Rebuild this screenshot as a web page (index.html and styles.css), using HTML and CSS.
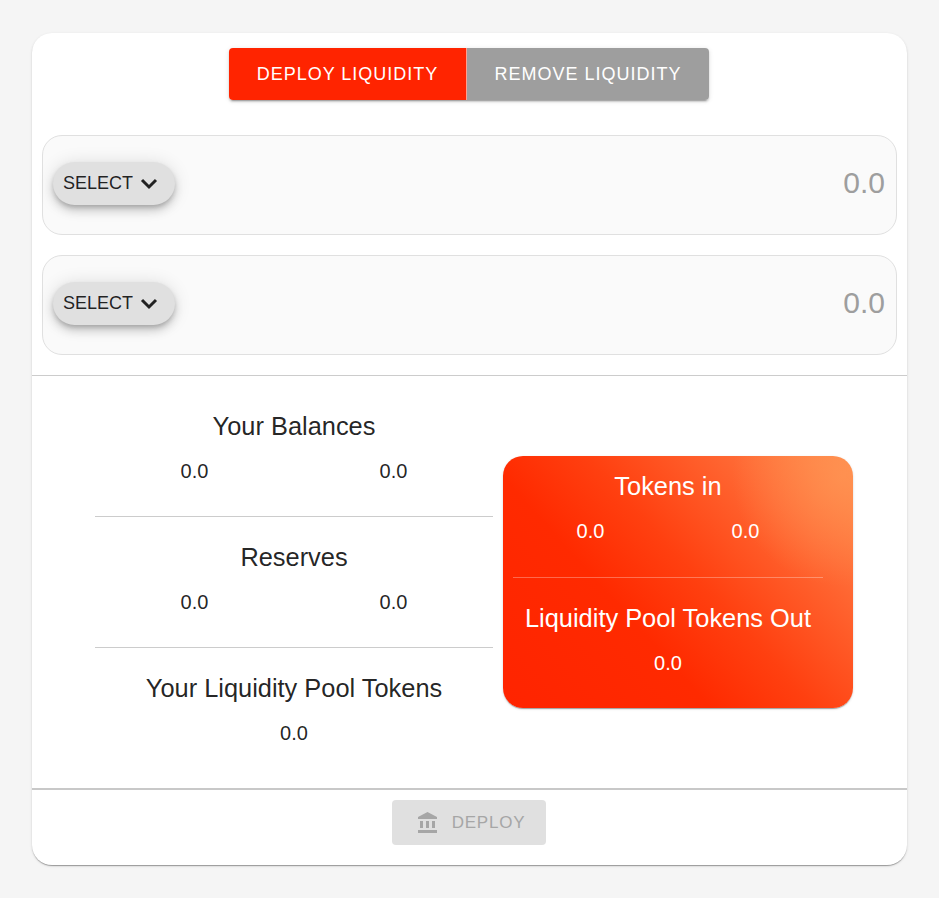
FILE: index.html
```html
<!DOCTYPE html>
<html lang="en">
<head>
<meta charset="utf-8">
<title>Liquidity</title>
<link rel="stylesheet" href="styles.css">
</head>
<body>
<main class="card">
  <div class="tabs">
    <button class="tab tab-active">Deploy Liquidity</button>
    <button class="tab tab-idle">Remove Liquidity</button>
  </div>
  <div class="inputs">
    <div class="field">
      <button class="select">SELECT
        <svg class="chev" viewBox="0 0 18 12"><path d="M2 2 9 9l7-7"/></svg>
      </button>
      <span class="amount">0.0</span>
    </div>
    <div class="field">
      <button class="select">SELECT
        <svg class="chev" viewBox="0 0 18 12"><path d="M2 2 9 9l7-7"/></svg>
      </button>
      <span class="amount">0.0</span>
    </div>
  </div>
  <hr class="rule">
  <div class="stats">
    <section class="left">
      <div class="group">
        <h2 class="title">Your Balances</h2>
        <div class="pair"><span>0.0</span><span>0.0</span></div>
      </div>
      <hr class="thin">
      <div class="group">
        <h2 class="title">Reserves</h2>
        <div class="pair"><span>0.0</span><span>0.0</span></div>
      </div>
      <hr class="thin">
      <div class="group">
        <h2 class="title">Your Liquidity Pool Tokens</h2>
        <div class="single">0.0</div>
      </div>
    </section>
    <section class="panel">
      <h2 class="title">Tokens in</h2>
      <div class="pair"><span>0.0</span><span>0.0</span></div>
      <hr class="panel-rule">
      <h2 class="title">Liquidity Pool Tokens Out</h2>
      <div class="single">0.0</div>
    </section>
  </div>
  <hr class="rule rule-bottom">
  <div class="actions">
    <button class="deploy" disabled>
      <svg class="bank" viewBox="0 0 24 24"><path d="M4 10v7h3v-7H4zm6 0v7h3v-7h-3zM2 22h19v-3H2v3zm14-12v7h3v-7h-3zm-4.500-9L2 6v2h19V6l-9.500-5z"/></svg>
      Deploy
    </button>
  </div>
</main>
</body>
</html>
```
FILE: styles.css
```css
* { box-sizing: border-box; }

html, body { margin: 0; }

body {
  background: #f5f5f5;
  padding: 33px 32px;
  font-family: "Liberation Sans", Arial, sans-serif;
  color: rgba(0, 0, 0, 0.87);
}

button { font-family: inherit; border: 0; }

.card {
  width: 875px;
  height: 832px;
  background: #fff;
  border-radius: 20px;
  box-shadow: 0 2px 1px -1px rgba(0,0,0,.2), 0 1px 1px 0 rgba(0,0,0,.14), 0 1px 3px 0 rgba(0,0,0,.12);
  padding-top: 15px;
}

.tabs {
  display: flex;
  width: 480px;
  margin-left: 197px;
  border-radius: 4px;
  box-shadow: 0 3px 1px -2px rgba(0,0,0,.2), 0 2px 2px 0 rgba(0,0,0,.14), 0 1px 5px 0 rgba(0,0,0,.12);
}

.tab {
  height: 52px;
  padding: 0;
  color: #fff;
  font-size: 18px;
  letter-spacing: 1px;
  text-transform: uppercase;
}

.tab-active {
  width: 238px;
  background: #ff2400;
  border-radius: 4px 0 0 4px;
  border-right: 1px solid #ffa08f;
}

.tab-idle {
  width: 242px;
  background: #9e9e9e;
  border-radius: 0 4px 4px 0;
}

.inputs {
  display: flex;
  flex-direction: column;
  gap: 20px;
  padding: 35px 10px 20px;
}

.field {
  display: flex;
  align-items: center;
  justify-content: space-between;
  height: 100px;
  padding: 0 11px 3px 10px;
  background: #fafafa;
  border: 1px solid #e0e0e0;
  border-radius: 20px;
}

.select {
  display: flex;
  align-items: center;
  gap: 7px;
  width: 122px;
  height: 43px;
  padding: 0 0 0 10px;
  background: #e0e0e0;
  border-radius: 22px;
  color: rgba(0, 0, 0, 0.87);
  font-size: 18px;
  box-shadow: 0 3px 5px -1px rgba(0,0,0,.2), 0 6px 10px 0 rgba(0,0,0,.14), 0 1px 18px 0 rgba(0,0,0,.12);
}

.chev { width: 18px; height: 12px; fill: none; stroke: #222; stroke-width: 3; }

.amount { margin-bottom: 1px; font-size: 30px; color: #9e9e9e; }

.rule {
  margin: 0;
  border: 0;
  height: 1px;
  background: #ccc;
}

.rule-bottom { height: 2px; background: #c8c8c8; }

.stats {
  display: flex;
  align-items: flex-start;
  gap: 10px;
  height: 412px;
  padding: 34px 0 0 63px;
}

.left { width: 398px; }

.group { text-align: center; }

.title {
  margin: 0;
  font-size: 25.4px;
  font-weight: 400;
  line-height: 32px;
  text-align: center;
}

.pair {
  display: grid;
  grid-template-columns: 1fr 1fr;
  margin-top: 14px;
  font-size: 20px;
  line-height: 30px;
  text-align: center;
}

.single {
  margin-top: 14px;
  font-size: 20px;
  line-height: 30px;
  text-align: center;
}

.thin {
  margin: 30px 0 24px;
  border: 0;
  height: 1px;
  background: #ccc;
}

.panel {
  width: 350px;
  height: 252px;
  margin-top: 46px;
  padding: 14px 30px 0 10px;
  color: #fff;
  border-radius: 20px;
  background:
    radial-gradient(circle 110px at 97% 8%, rgba(255, 150, 85, 0.7), rgba(255, 150, 85, 0)),
    linear-gradient(48deg, #ff2400 0%, #ff2a00 36%, #ff4010 54%, #ff6a35 80%, #ff8a4a 100%);
  box-shadow: 0 2px 1px -1px rgba(0,0,0,.2), 0 1px 1px 0 rgba(0,0,0,.14), 0 1px 3px 0 rgba(0,0,0,.12);
}

.panel-rule {
  margin: 31px 0 24px;
  border: 0;
  height: 1px;
  background: rgba(255, 255, 255, 0.3);
}

.actions {
  display: flex;
  justify-content: center;
  padding-top: 10px;
  padding-right: 1px;
}

.deploy {
  display: flex;
  align-items: center;
  justify-content: center;
  gap: 12px;
  width: 154px;
  height: 45px;
  padding: 0 0 0 3px;
  background: #e0e0e0;
  border-radius: 4px;
  color: #a6a6a6;
  font-size: 17px;
  letter-spacing: 0.75px;
  text-transform: uppercase;
}

.bank { width: 24px; height: 24px; fill: #a6a6a6; }
```
